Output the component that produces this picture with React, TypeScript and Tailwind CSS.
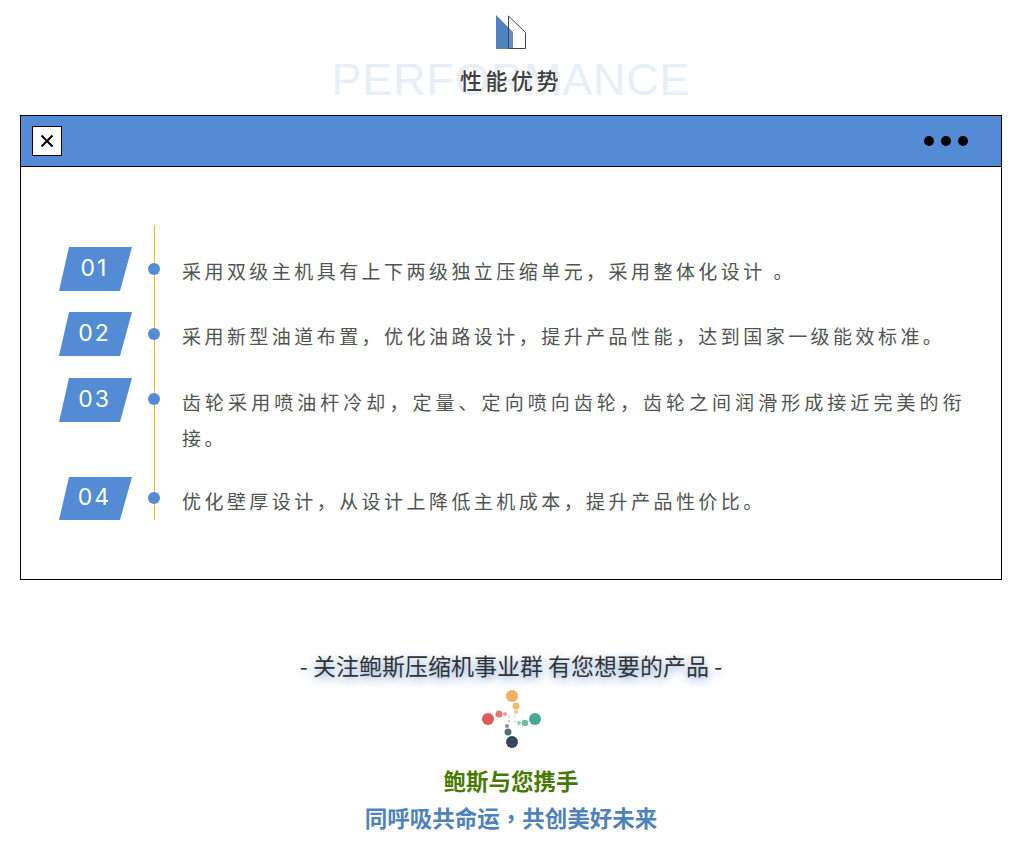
import React from 'react';

const cjk = 'font-["Noto_Sans_CJK_SC","Liberation_Sans",sans-serif]';

const rows = [
  { no: '01', pad: 'pt-[28px] pb-[23px]', text: '采用双级主机具有上下两级独立压缩单元，采用整体化设计 。', dot: 'top-[38px]', top: 'pt-[22px]', badge: 'h-[44px]' },
  { no: '02', pad: 'pt-[6px] pb-[24px]', text: '采用新型油道布置，优化油路设计，提升产品性能，达到国家一级能效标准。', dot: 'top-[16px]', top: '', badge: 'h-[44px]' },
  { no: '03', pad: 'pt-[6px] pb-[21px]', text: '齿轮采用喷油杆冷却，定量、定向喷向齿轮，齿轮之间润滑形成接近完美的衔接。', dot: 'top-[15px]', top: '', badge: 'h-[44px]' },
  { no: '04', pad: 'pt-[6px] pb-[1px]', text: '优化壁厚设计，从设计上降低主机成本，提升产品性价比。', dot: 'top-[15px]', top: '', badge: 'h-[43px]' },
];

const SectionMark = () => (
  <svg width="32" height="36" viewBox="0 0 32 36" className="block">
    <polygon points="1,1 18,18 18,35 1,35" fill="#4f81bd" />
    <polygon points="13.5,2 30.5,18.500 30.5,34.500 13.5,34.500" fill="#ffffff" fillOpacity="0.1" stroke="#444" strokeWidth="1" />
  </svg>
);

const FollowMark = () => {
  const dots = [
    [31, 6, 6, '#f0b060'], [35, 16, 3.500, '#f2b86c'], [35, 22, 2.200, '#f6cd94'], [34, 26, 1, '#f8dcb8'],
    [7, 29, 6, '#de5a5a'], [18, 24, 3.500, '#e37878'], [24, 24, 2, '#eb9a9a'], [28, 27, 1, '#f0bcbc'],
    [54, 29, 6, '#48a894'], [44, 33, 3.300, '#6db9a8'], [38, 33, 2, '#8ccabc'], [34, 32, 1, '#b4dcd2'],
    [31, 52, 6, '#34495a'], [27, 42, 3.500, '#5a6c7a'], [26, 36, 2, '#7f8e9a'], [28, 31, 1, '#aab4bc'],
  ];
  return (
    <svg width="62" height="60" viewBox="0 0 62 60" className="block">
      <defs>
        <filter id="soft" x="-50%" y="-50%" width="200%" height="200%">
          <feGaussianBlur stdDeviation="0.6" />
        </filter>
      </defs>
      {dots.map(([cx, cy, r, c], i) => (
        <circle key={i} cx={cx as number} cy={cy as number} r={r as number} fill={c as string} filter="url(#soft)" />
      ))}
    </svg>
  );
};

export default function App() {
  return (
    <div className={`${cjk} w-[1022px] h-[847px] bg-white overflow-hidden`}>
      {/* title */}
      <div className="flex flex-col items-center pt-[14px] h-[115px]">
        <SectionMark />
        <div className="relative mt-[5px] h-[50px] w-full flex items-center justify-center">
          <span className='font-["Liberation_Sans",sans-serif] text-[45px] leading-[50px] text-[#e8eef6] tracking-[0.800px]'>PERFORMANCE</span>
          <span className="absolute inset-0 flex items-center justify-center text-[22px] tracking-[3.500px] font-medium text-[#3f3f3f] pb-[1px]">性能优势</span>
        </div>
      </div>

      {/* window card */}
      <div className="mx-[20px] h-[465px] border border-black">
        <div className="h-[51px] bg-[#538cd5] border-b border-black flex items-center justify-between pl-[11px] pr-[33px]">
          <div className="w-[30px] h-[30px] bg-white border border-black flex items-center justify-center">
            <svg width="14" height="14" viewBox="0 0 14 14">
              <path d="M1.500 1.500L12.500 12.500M12.500 1.500L1.500 12.500" stroke="#000" strokeWidth="2" />
            </svg>
          </div>
          <div className="flex gap-[7px]">
            <div className="w-[10px] h-[10px] rounded-full bg-black" />
            <div className="w-[10px] h-[10px] rounded-full bg-black" />
            <div className="w-[10px] h-[10px] rounded-full bg-black" />
          </div>
        </div>

        <div className="pt-[58px] pl-[38px] pr-[36px]">
          {rows.map((r) => (
            <div key={r.no} className="flex">
              <div className={`w-[95px] shrink-0 ${r.top}`}>
                <div className={`w-[73px] ${r.badge} bg-[#538cd5] [clip-path:polygon(10px_0,100%_0,61px_100%,0_100%)] flex items-center justify-center pb-[2px] pr-[2px]`}>
                  <span className='font-["Inter",sans-serif] text-[23px] tracking-[2px] text-white'>{r.no}</span>
                </div>
              </div>
              <div className={`relative flex-1 border-l border-[#fcb814] pl-[27px] ${r.pad}`}>
                <span className={`absolute left-[-7px] w-[12px] h-[12px] rounded-full bg-[#538cd5] ${r.dot}`} />
                <p className="text-[19px] leading-[36px] tracking-[3.450px] text-justify text-[#4f5451]">{r.text}</p>
              </div>
            </div>
          ))}
        </div>
      </div>

      {/* footer */}
      <div className="flex flex-col items-center pt-[70px]">
        <p className="text-[23px] leading-[30px] text-[#333] [text-shadow:0_3px_10px_#6f97d4]">- 关注鲍斯压缩机事业群 有您想要的产品 -</p>
        <div className="mt-[10px] ml-[1px]">
          <FollowMark />
        </div>
        <p className="mt-[14px] text-[22.500px] leading-[32px] font-bold text-[#467a00]">鲍斯与您携手</p>
        <p className="mt-[5px] text-[22.500px] leading-[32px] font-bold text-[#4f81bd]">
          同呼吸共命运<span className='font-["Noto_Sans_CJK_TC",sans-serif]'>，</span>共创美好未来
        </p>
      </div>
    </div>
  );
}
